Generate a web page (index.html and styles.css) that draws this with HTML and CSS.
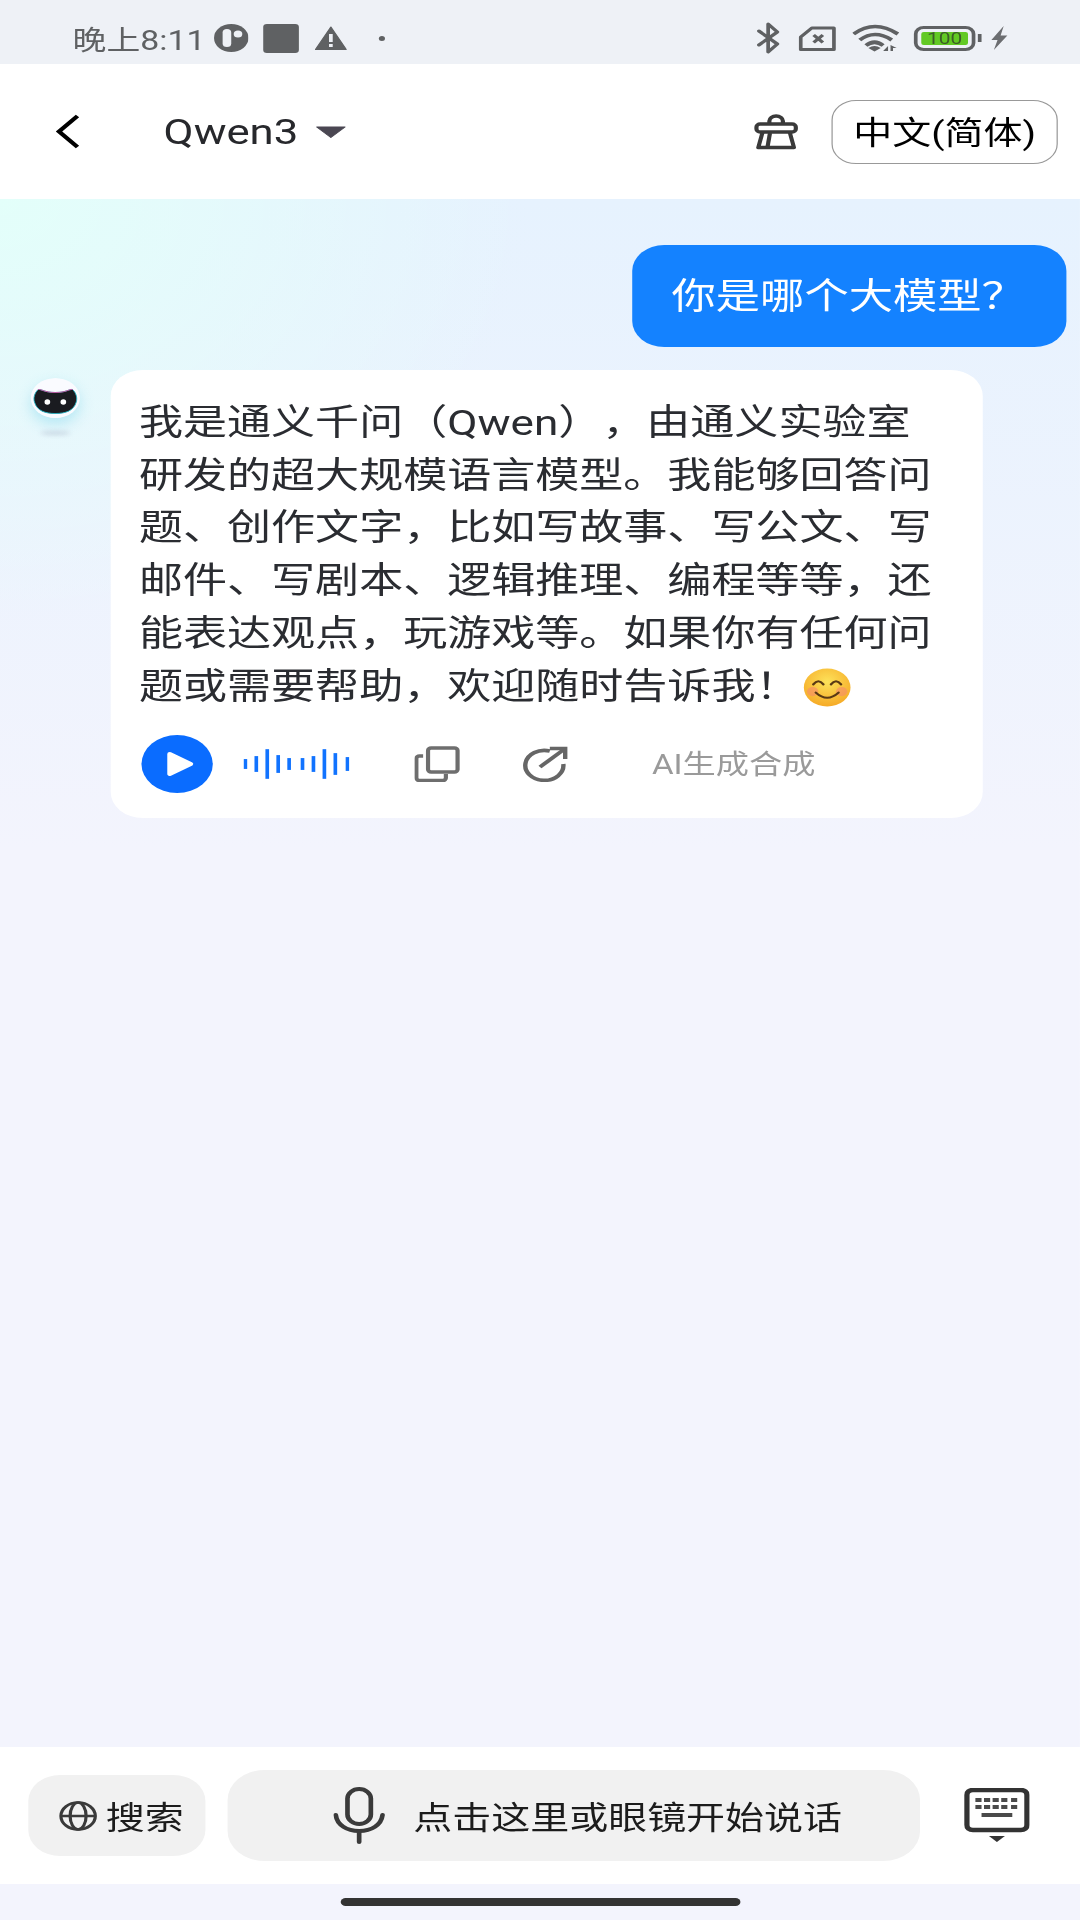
FILE: index.html
```html
<!DOCTYPE html>
<html lang="zh-CN">
<head>
    <meta charset="UTF-8">
    <meta name="viewport" content="width=device-width, initial-scale=1.0">
    <title>Qwen3</title>
    <link rel="stylesheet" href="styles.css">
</head>
<body>
<div class="screen">

    <!-- status bar -->
    <div class="status-bar">
        <div class="status-left">
            <span class="clock">晚上8:11</span>
            <svg class="st-circle" viewBox="0 0 28 28"><circle cx="14" cy="14" r="14" fill="#5f6163"/><rect x="7" y="5" width="7" height="18" rx="3.5" fill="#eef1f6"/><circle cx="19.500" cy="10" r="3.500" fill="#eef1f6"/></svg>
            <span class="st-square"></span>
            <svg class="st-warn" viewBox="0 0 26 24"><path d="M13 1 L25.500 23.500 H0.500 Z" fill="#5f6163" stroke="#5f6163" stroke-linejoin="round"/><rect x="11.500" y="8" width="3" height="8" fill="#eef1f6"/><rect x="11.500" y="18" width="3" height="3" fill="#eef1f6"/></svg>
            <span class="st-dot"></span>
        </div>
        <div class="status-right">
            <svg class="st-bt" viewBox="0 0 20 32"><path d="M2 9 L17 22 L9.500 30 V2 L17 10 L2 23" fill="none" stroke="#5f6163" stroke-width="3" stroke-linejoin="round" stroke-linecap="round"/></svg>
            <svg class="st-sim" viewBox="0 0 31 25"><path d="M11 2 H29 V23.500 H2 V11 Z" fill="none" stroke="#5f6163" stroke-width="3" stroke-linejoin="round"/><path d="M12.500 9 L20 16.500 M20 9 L12.500 16.500" stroke="#5f6163" stroke-width="3"/></svg>
            <svg class="st-wifi" viewBox="0 0 38 28"><g fill="none" stroke="#5f6163" stroke-width="3.600"><path d="M1 10 Q18 -5 37 10"/><path d="M6 16 Q18 5 32 16"/><path d="M11 21.500 Q18 15 25 21.500"/></g><path d="M13 24 Q18 20 23 24 L18 27.500 Z" fill="#5f6163"/><path d="M25 27 L29 22 V27 Z M31 21 L36 24 H33 V27 H31 Z" fill="#5f6163"/></svg>
            <div class="battery"><span class="battery-fill">100</span></div>
            <span class="battery-tip"></span>
            <svg class="st-bolt" viewBox="0 0 15 24"><path d="M11 0 L1 14 H6 L3 24 L14 9.500 H8.500 Z" fill="#6b6d70"/></svg>
        </div>
    </div>

    <!-- header -->
    <div class="header">
        <svg class="back" viewBox="0 0 20 35"><path d="M18 2 L3 17.500 L18 33" fill="none" stroke="#000" stroke-width="3.800"/></svg>
        <span class="model-name">Qwen3</span>
        <svg class="caret" viewBox="0 0 25 12"><path d="M1 1 H24 L12.500 11.500 Z" fill="#4a4752" stroke="#4a4752" stroke-linejoin="round"/></svg>
        <svg class="broom" viewBox="0 0 36 36"><g fill="none" stroke="#3a3a3a" stroke-width="3.400" stroke-linejoin="round"><path d="M12.500 10 V7 a5.500 5 0 0 1 11 0 V10"/><rect x="2" y="10" width="32" height="8" rx="3"/><path d="M7 18 L3.500 33.500 H32.500 L29 18"/><path d="M13 19 L11 33"/></g></svg>
        <button class="lang-btn">中文(简体)</button>
    </div>

    <!-- chat -->
    <div class="chat">
        <div class="msg-user">你是哪个大模型？</div>
        <div class="msg-row">
            <div class="avatar-wrap">
                <svg class="avatar" viewBox="0 0 40 40">
                    <ellipse cx="20" cy="20" rx="20" ry="20" fill="#fafbff"/>
                    <path d="M6 11.500 C9 11 11 14.500 20 14.500 C29 14.500 31 11 34 11.500 C37 15 38 20 37 24 C35 33 28 35.500 20 35.500 C12 35.500 5 33 3 24 C2 20 3 15 6 11.500 Z" fill="#1a1b20" stroke="#23b3c2" stroke-width="0.800"/>
                    <path d="M6 11.500 C9 11 11 14.500 20 14.500 C29 14.500 31 11 34 11.500" fill="none" stroke="#d24a9a" stroke-width="0.800"/>
                    <ellipse cx="13.500" cy="24" rx="2.300" ry="2.800" fill="#fff"/>
                    <ellipse cx="26.500" cy="24" rx="2.300" ry="2.800" fill="#fff"/>
                </svg>
                <span class="avatar-shadow"></span>
            </div>
            <div class="msg-bot">
                <p class="msg-text">我是通义千问（Qwen），由通义实验室研发的超大规模语言模型。我能够回答问题、创作文字，比如写故事、写公文、写邮件、写剧本、逻辑推理、编程等等，还能表达观点，玩游戏等。如果你有任何问题或需要帮助，欢迎随时告诉我！<svg class="emoji" viewBox="0 0 38 38"><defs><radialGradient id="face" cx="50%" cy="35%" r="70%"><stop offset="0" stop-color="#fde25a"/><stop offset="1" stop-color="#f5a623"/></radialGradient></defs><circle cx="19" cy="19" r="18.500" fill="url(#face)"/><circle cx="7.500" cy="23" r="4.500" fill="#f58a6a" opacity="0.600"/><circle cx="30.500" cy="23" r="4.500" fill="#f58a6a" opacity="0.600"/><g fill="none" stroke="#5a3a14" stroke-width="2" stroke-linecap="round"><path d="M8 16 Q12 10 16 16"/><path d="M22 16 Q26 10 30 16"/><path d="M10 24 Q19 34 28 24"/></g></svg></p>
                <div class="actions">
                    <div class="play"><svg viewBox="0 0 24 26"><path d="M4 3 L21 13 L4 23 Z" fill="#fff" stroke="#fff" stroke-width="4" stroke-linejoin="round"/></svg></div>
                    <svg class="wave" viewBox="0 0 87 30" fill="#1173ff">
                        <rect x="0" y="10" width="3" height="10"/>
                        <rect x="9" y="7" width="3" height="16"/>
                        <rect x="18" y="0" width="3" height="30"/>
                        <rect x="27" y="6" width="3" height="18"/>
                        <rect x="36" y="9" width="3" height="12"/>
                        <rect x="47" y="9" width="3" height="12"/>
                        <rect x="56" y="7" width="3" height="16"/>
                        <rect x="65" y="0" width="3" height="30"/>
                        <rect x="74" y="4" width="3" height="22"/>
                        <rect x="84" y="8" width="3" height="14"/>
                    </svg>
                    <svg class="copy" viewBox="0 0 37 36"><g fill="none" stroke="#6e6e6e" stroke-width="3.400" stroke-linejoin="round"><path d="M7 10 H4 a2.500 2.500 0 0 0 -2.500 2.500 V32 a2.500 2.500 0 0 0 2.500 2.500 H23 a2.500 2.500 0 0 0 2.500 -2.500 V28"/><rect x="11" y="2" width="24" height="24" rx="2.500"/></g></svg>
                    <svg class="share" viewBox="0 0 39 36"><g fill="none" stroke="#666" stroke-width="3.600"><path d="M24 5 A15.500 15 0 1 0 35 18"/><path d="M16 21 L36 3"/><path d="M24 2.500 H36.500 V13"/></g></svg>
                    <span class="ai-note">AI生成合成</span>
                </div>
            </div>
        </div>
    </div>

    <!-- input bar -->
    <div class="input-bar">
        <div class="search-pill">
            <svg class="globe" viewBox="0 0 31 30"><g fill="none" stroke="#3a3a3a" stroke-width="2.600"><ellipse cx="15.500" cy="15" rx="14" ry="13.500"/><ellipse cx="15.500" cy="15" rx="6.500" ry="13.500"/><path d="M1.500 15 H29.500"/></g></svg>
            <span>搜索</span>
        </div>
        <div class="talk-pill">
            <svg class="mic" viewBox="0 0 42 57"><g fill="none" stroke="#3a3a3a" stroke-width="3.800" stroke-linecap="round"><rect x="11.500" y="2" width="19" height="35" rx="9.500"/><path d="M2 28 C3 38 11 44 21 44 C31 44 39 38 40 28"/><path d="M21 44 V55"/></g></svg>
            <span>点击这里或眼镜开始说话</span>
        </div>
        <svg class="keyboard" viewBox="0 0 53 56">
            <rect x="2" y="2" width="49" height="40" rx="5" fill="none" stroke="#333" stroke-width="4.500"/>
            <g fill="#4a4a4a">
                <rect x="9" y="10" width="5" height="4"/><rect x="16" y="10" width="5" height="4"/><rect x="23" y="10" width="5" height="4"/><rect x="30" y="10" width="5" height="4"/><rect x="38" y="10" width="5" height="4"/>
                <rect x="9" y="17" width="5" height="4"/><rect x="16" y="17" width="5" height="4"/><rect x="23" y="17" width="5" height="4"/><rect x="30" y="17" width="5" height="4"/><rect x="38" y="17" width="5" height="4"/>
                <rect x="14" y="25" width="25" height="4"/>
            </g>
            <path d="M20 48 H33 L26.500 54 Z" fill="#333"/>
        </svg>
    </div>

    <!-- gesture bar -->
    <div class="home-strip"><span class="home-bar"></span></div>

</div>
</body>
</html>
```

FILE: styles.css
```css
html, body {
    margin: 0;
    padding: 0;
    width: 1080px;
    height: 1920px;
    overflow: hidden;
    background: #f3f4fd;
}

/* the capture is wider than it is tall by 1.23, everything below is in unstretched px */
.screen {
    width: 878px;
    height: 1920px;
    display: flex;
    flex-direction: column;
    transform: scaleX(1.23);
    transform-origin: 0 0;
    font-family: Roboto, "Noto Sans CJK SC", sans-serif;
    color: #2a2c31;
    text-spacing-trim: space-all;
}

svg {
    display: block;
    flex: none;
}

.status-bar {
    height: 64px;
    flex: none;
    box-sizing: border-box;
    display: flex;
    align-items: center;
    justify-content: space-between;
    padding: 12px 58px 0 59px;
    background: #eef1f6;
    color: #5f6163;
}

.status-left,
.status-right {
    display: flex;
    align-items: center;
}

.clock {
    width: 115px;
    font-size: 27.500px;
    white-space: nowrap;
}

.st-circle {
    width: 28px;
    height: 28px;
}

.st-square {
    width: 29px;
    height: 29px;
    margin-left: 12px;
    border-radius: 3px;
    background: #5f6163;
}

.st-warn {
    width: 26px;
    height: 24px;
    margin-left: 13px;
}

.st-dot {
    width: 5px;
    height: 5px;
    margin-left: 26px;
    border-radius: 50%;
    background: #5f6163;
}

.st-bt {
    width: 20px;
    height: 32px;
}

.st-sim {
    width: 31px;
    height: 25px;
    margin-left: 14px;
}

.st-wifi {
    width: 38px;
    height: 28px;
    margin-left: 13px;
}

.battery {
    width: 50px;
    height: 25px;
    margin-left: 12px;
    padding: 3px;
    box-sizing: border-box;
    border: 3px solid #5f6163;
    border-radius: 8px;
    display: flex;
}

.battery-fill {
    flex: 1;
    border-radius: 2px;
    background: #62c924;
    color: #3c5d28;
    font-size: 17px;
    line-height: 13px;
    text-align: center;
}

.battery-tip {
    width: 3px;
    height: 8px;
    margin-left: 2px;
    background: #5f6163;
}

.st-bolt {
    width: 15px;
    height: 24px;
    margin-left: 7px;
}

.header {
    height: 135px;
    flex: none;
    display: flex;
    align-items: center;
    padding: 0 18px 0 45px;
    background: #fff;
}

.back {
    width: 20px;
    height: 35px;
}

.model-name {
    margin-left: 68px;
    font-size: 35.500px;
    color: #27282c;
}

.caret {
    width: 26px;
    height: 12px;
    margin-left: 14px;
}

.broom {
    width: 36px;
    height: 36px;
    margin-left: auto;
}

.lang-btn {
    width: 184px;
    height: 64px;
    margin-left: 27px;
    padding: 0 0 3px;
    border: 1px solid #999;
    border-radius: 20px;
    background: #fff;
    color: #000;
    font-family: inherit;
    font-size: 31.700px;
}

.chat {
    flex: 1;
    display: flex;
    flex-direction: column;
    padding: 46px 11px 0 0;
    background:
        radial-gradient(ellipse 430px 420px at 0 0, #e3fffa 0%, rgba(227, 255, 250, 0) 100%),
        linear-gradient(to bottom, #e6f2fe 0%, #f3f4fd 42%);
}

.msg-user {
    align-self: flex-end;
    padding: 26px 33px 24px 32px;
    border-radius: 26px;
    background: #1482ff;
    color: #fff;
    font-size: 36px;
    line-height: 52px;
}

.msg-row {
    display: flex;
    margin-top: 23px;
}

.avatar-wrap {
    width: 40px;
    margin: 8px 25px 0 25px;
    display: flex;
    flex-direction: column;
    align-items: center;
}

.avatar {
    width: 40px;
    height: 40px;
    border-radius: 50%;
    box-shadow: 0 6px 12px rgba(120, 210, 235, 0.45);
}

.avatar-shadow {
    width: 24px;
    height: 4px;
    margin-top: 13px;
    border-radius: 50%;
    background: rgba(170, 180, 200, 0.45);
    filter: blur(2px);
}

.msg-bot {
    width: 709px;
    box-sizing: border-box;
    padding: 27px 23px 25px 23px;
    border-radius: 26px;
    background: #fff;
}

.msg-text {
    margin: 0;
    width: 650px;
    font-size: 35.800px;
    line-height: 52.700px;
}

.emoji {
    display: inline-block;
    width: 39px;
    height: 39px;
    margin-left: 3px;
    vertical-align: -8px;
}

.actions {
    display: flex;
    align-items: center;
    margin-top: 22px;
    padding-left: 2px;
}

.play {
    width: 58px;
    height: 58px;
    display: flex;
    align-items: center;
    justify-content: center;
    border-radius: 50%;
    background: #0a6cff;
}

.play svg {
    width: 24px;
    height: 26px;
    margin-left: 3px;
}

.wave {
    width: 86px;
    height: 30px;
    margin-left: 25px;
}

.copy {
    width: 37px;
    height: 36px;
    margin-left: 53px;
}

.share {
    width: 39px;
    height: 36px;
    margin-left: 49px;
}

.ai-note {
    margin-left: 68px;
    margin-bottom: 3px;
    font-size: 27px;
    color: #9a9a9a;
}

.input-bar {
    height: 137px;
    flex: none;
    display: flex;
    align-items: center;
    padding-left: 23px;
    background: #fff;
    color: #1c1c1c;
    font-size: 31.700px;
}

.search-pill {
    width: 144px;
    height: 81px;
    box-sizing: border-box;
    display: flex;
    align-items: center;
    gap: 7px;
    padding-left: 25px;
    border-radius: 26px;
    background: #f1f1f1;
}

.search-pill span,
.talk-pill span {
    margin-bottom: 2px;
}

.globe {
    width: 31px;
    height: 30px;
}

.talk-pill {
    width: 563px;
    height: 91px;
    box-sizing: border-box;
    display: flex;
    align-items: center;
    gap: 23px;
    margin-left: 18px;
    padding-left: 86px;
    border-radius: 30px;
    background: #f1f1f1;
}

.mic {
    width: 42px;
    height: 57px;
}

.keyboard {
    width: 53px;
    height: 56px;
    margin-left: 36px;
}

.home-strip {
    height: 36px;
    flex: none;
    background: #f3f4fd;
    display: flex;
    justify-content: center;
}

.home-bar {
    width: 325px;
    height: 8px;
    margin-top: 14px;
    border-radius: 4px;
    background: #333;
}
```
